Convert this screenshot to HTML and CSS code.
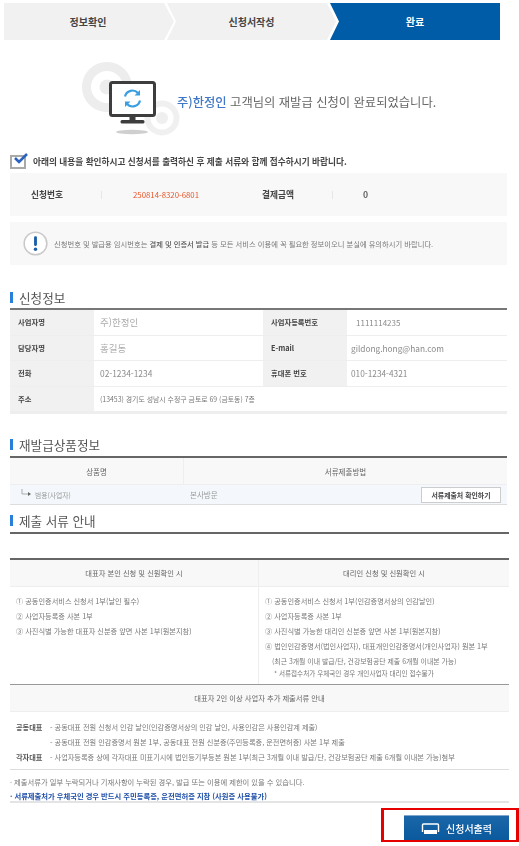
FILE: index.html
```html
<!DOCTYPE html>
<html lang="ko">
<head>
<meta charset="utf-8">
<title>재발급 신청 완료</title>
<link rel="stylesheet" href="styles.css">
</head>
<body>
<div class="page">
  <div class="steps">
    <div class="step step-first">정보확인</div>
    <div class="step step-mid">신청서작성</div>
    <div class="step step-last">완료</div>
  </div>

  <div class="hero">
    <svg class="hero-icon" width="100" height="76" viewBox="0 0 100 76">
      <circle cx="27" cy="26" r="20.500" fill="none" stroke="#ededed" stroke-width="9"/>
      <circle cx="27" cy="26" r="7.500" fill="#ededed"/>
      <circle cx="82" cy="57" r="14.500" fill="none" stroke="#f0f0f0" stroke-width="6"/>
      <circle cx="82" cy="57" r="6" fill="#efefef"/>
      <ellipse cx="52" cy="71" rx="16" ry="2.200" fill="#cfcfcf"/>
      <rect x="30.500" y="21.500" width="44" height="33" rx="2" fill="#fff" stroke="#3d3d3d" stroke-width="3"/>
      <rect x="49.500" y="55" width="6" height="5" fill="#3d3d3d"/>
      <rect x="40.500" y="59" width="24" height="3.600" rx="1.500" fill="#3d3d3d"/>
      <path d="M45 35.500a7.600 7.600 0 0 1 13-3.500" fill="none" stroke="#3a9ee0" stroke-width="2.200"/>
      <path d="M60 29v5.500h-5.500z" fill="#3a9ee0"/>
      <path d="M60 39.500a7.600 7.600 0 0 1-13 3.500" fill="none" stroke="#3a9ee0" stroke-width="2.200"/>
      <path d="M45 46v-5.500h5.500z" fill="#3a9ee0"/>
    </svg>
    <p class="hero-text"><span class="hero-name">주)한정인</span> 고객님의 재발급 신청이 완료되었습니다.</p>
  </div>

  <div class="confirm">
    <svg class="confirm-icon" width="18" height="16" viewBox="0 0 18 16">
      <rect x="1" y="3" width="14" height="12" fill="#fff" stroke="#a9a9a9" stroke-width="2"/>
      <path d="M5 5l4 4 8-8" fill="none" stroke="#2a62c0" stroke-width="2.600"/>
    </svg>
    <span>아래의 내용을 확인하시고 신청서를 출력하신 후 제출 서류와 함께 접수하시기 바랍니다.</span>
  </div>

  <div class="receipt">
    <span class="receipt-label">신청번호</span>
    <span class="divider"></span>
    <span class="receipt-no">250814-8320-6801</span>
    <span class="receipt-label">결제금액</span>
    <span class="divider"></span>
    <span class="receipt-amount">0</span>
  </div>

  <div class="notice">
    <svg width="25" height="25" viewBox="0 0 26 26">
      <circle cx="13" cy="13" r="11.800" fill="#fff" stroke="#c9c9c9" stroke-width="1.600"/>
      <rect x="11.500" y="5.500" width="3" height="10" rx="1.200" fill="#1d5fa8"/>
      <circle cx="13" cy="19" r="1.800" fill="#1d5fa8"/>
    </svg>
    <p>신청번호 및 발급용 임시번호는 <b>결제 및 인증서 발급</b> 등 모든 서비스 이용에 꼭 필요한 정보이오니 분실에 유의하시기 바랍니다.</p>
  </div>

  <h2 class="title title-info">신청정보</h2>
  <div class="info">
    <div class="lab">사업자명</div><div class="val val-lg">주)한정인</div>
    <div class="lab">사업자등록번호</div><div class="val val-id">1111114235</div>
    <div class="lab">담당자명</div><div class="val val-lg">홍길동</div>
    <div class="lab">E-mail</div><div class="val val-right">gildong.hong@han.com</div>
    <div class="lab">전화</div><div class="val">02-1234-1234</div>
    <div class="lab">휴대폰 번호</div><div class="val val-right">010-1234-4321</div>
    <div class="lab">주소</div><div class="val val-addr">(13453) 경기도 성남시 수정구 금토로 69 (금토동) 7층</div>
  </div>

  <h2 class="title title-prod">재발급상품정보</h2>
  <div class="prod">
    <div class="prod-head prod-head-a">상품명</div>
    <div class="prod-head">서류제출방법</div>
    <div class="prod-cell prod-name">
      <svg width="12" height="8" viewBox="0 0 12 8"><path d="M1 0v5h6" fill="none" stroke="#aaa"/><path d="M7 3l3 2-3 2z" fill="#666"/></svg>
      <span>범용(사업자)</span>
    </div>
    <div class="prod-cell prod-method">
      <span>본사방문</span>
      <button class="check-btn">서류제출처 확인하기</button>
    </div>
  </div>

  <h2 class="title title-docs">제출 서류 안내</h2>
  <div class="docs-gap"></div>
  <div class="docs">
    <div class="docs-head docs-left">대표자 본인 신청 및 신원확인 시</div>
    <div class="docs-head">대리인 신청 및 신원확인 시</div>
    <div class="docs-body docs-left">
      <p>① 공동인증서비스 신청서 1부(날인 필수)</p>
      <p>② 사업자등록증 사본 1부</p>
      <p>③ 사진식별 가능한 대표자 신분증 앞면 사본 1부(원본지참)</p>
    </div>
    <div class="docs-body">
      <p>① 공동인증서비스 신청서 1부(인감증명서상의 인감날인)</p>
      <p>② 사업자등록증 사본 1부</p>
      <p>③ 사진식별 가능한 대리인 신분증 앞면 사본 1부(원본지참)</p>
      <p>④ 법인인감증명서(법인사업자), 대표개인인감증명서(개인사업자) 원본 1부</p>
      <p class="docs-sub">(최근 3개월 이내 발급/단, 건강보험공단 제출 6개월 이내본 가능)</p>
      <p class="docs-foot">* 서류접수처가 우체국인 경우 개인사업자 대리인 접수불가</p>
    </div>
  </div>

  <div class="extra-head">대표자 2인 이상 사업자 추가 제출서류 안내</div>
  <div class="extra">
    <b>공동대표</b><span>- 공동대표 전원 신청서 인감 날인(인감증명서상의 인감 날인, 사용인감은 사용인감계 제출)</span>
    <b></b><span>- 공동대표 전원 인감증명서 원본 1부, 공동대표 전원 신분증(주민등록증, 운전면허증) 사본 1부 제출</span>
    <b>각자대표</b><span>- 사업자등록증 상에 각자대표 미표기시에 법인등기부등본 원본 1부(최근 3개월 이내 발급/단, 건강보험공단 제출 6개월 이내본 가능)첨부</span>
  </div>

  <div class="notes">
    <p>· 제출서류가 일부 누락되거나 기재사항이 누락된 경우, 발급 또는 이용에 제한이 있을 수 있습니다.</p>
    <p class="notes-strong">· 서류제출처가 우체국인 경우 반드시 주민등록증, 운전면허증 지참 (사원증 사용불가)</p>
  </div>

  <div class="actions">
    <div class="highlight">
      <button class="print-btn">
        <svg width="19" height="11" viewBox="0 0 19 11"><path d="M1.500 9V2a1 1 0 0 1 1-1h14a1 1 0 0 1 1 1v7" fill="none" stroke="#fff" stroke-width="1.400"/><rect x="3" y="7" width="13" height="4" fill="#fff"/></svg>
        <span>신청서출력</span>
      </button>
    </div>
  </div>
</div>
</body>
</html>
```

FILE: styles.css
```css
* { box-sizing: border-box; }
html, body { margin: 0; padding: 0; background: #fff; }
body {
  font-family: "Noto Sans CJK KR", "Noto Sans", sans-serif;
  color: #555;
  width: 519px;
  height: 846px;
  overflow: hidden;
}
p, h2 { margin: 0; }
.page { padding: 3px 0 0 10px; filter: blur(0.35px); }

.steps { display: flex; height: 37px; margin-left: -6px; width: 496px; font-size: 10px; font-weight: 700; color: #444; }
.step { display: flex; align-items: center; justify-content: center; background: #f1f1f1; }
.step-first { width: 170px; clip-path: polygon(0 0, 160px 0, 170px 50%, 160px 100%, 0 100%); padding-right: 2px; }
.step-mid { width: 169px; margin-left: -7px; clip-path: polygon(0 0, 160px 0, 169px 50%, 160px 100%, 0 100%, 9px 50%); }
.step-last { width: 170px; margin-left: -6px; background: #005ca6; color: #fff; clip-path: polygon(0 0, 100% 0, 100% 100%, 0 100%, 9px 50%); }

.hero { display: flex; align-items: center; height: 76px; margin-top: 20px; margin-left: 70px; }
.hero-icon { flex: none; margin-right: -3px; position: relative; top: 1px; overflow: visible; }
.hero-text { font-size: 12.300px; color: #666; white-space: nowrap; margin-top: 8px; }
.hero-name { color: #3f78c8; font-weight: 500; }

.confirm { display: flex; align-items: center; gap: 5px; height: 18px; margin-top: 16px; font-size: 8.670px; font-weight: 700; color: #444; white-space: nowrap; }
.confirm-icon { flex: none; }

.receipt { display: flex; align-items: center; width: 497px; height: 43px; margin-top: 3px; padding-left: 21px; background: #f8f8f8; font-size: 8.700px; }
.receipt-label { width: 70px; font-weight: 700; color: #444; }
.divider { width: 1px; height: 8px; background: #e6e6e6; }
.receipt-no { width: 129px; margin-left: 31px; font-size: 7.800px; color: #e8562a; }
.receipt-amount { margin-left: 30px; font-weight: 700; color: #666; }

.notice { display: flex; align-items: center; gap: 6px; width: 497px; height: 43px; margin-top: 6px; padding-left: 13px; background: #f8f8f8; font-size: 7.300px; color: #777; white-space: nowrap; }
.notice svg { flex: none; }
.notice b { color: #555; font-weight: 500; }

.title { display: flex; align-items: center; height: 11px; padding-left: 6px; border-left: 3px solid #2a80d8; font-size: 12.600px; font-weight: 400; line-height: 16px; color: #555; white-space: nowrap; }
.title-info { margin-top: 27px; }
.title-prod { margin-top: 25px; }
.title-docs { margin-top: 10px; }

.info { display: grid; grid-template-columns: 84px 169px 84px 160px; grid-auto-rows: 25.500px; width: 497px; margin-top: 5px; border-top: 2px solid #777; border-bottom: 2px solid #eee; }
.lab, .val { display: flex; align-items: center; border-bottom: 1px solid #eee; }
.lab { padding-left: 8px; background: #f1f1f1; font-size: 7.300px; font-weight: 700; color: #444; }
.val { padding-left: 6px; font-size: 8.400px; color: #8a8a8a; }
.val-lg { font-size: 9.500px; color: #aaa; }
.val-id { padding-left: 9px; font-size: 8px; }
.val-right { padding-left: 4px; font-size: 8.300px; }
.val-addr { grid-column: span 3; font-size: 6.900px; color: #777; }

.prod { display: grid; grid-template-columns: 174px 323px; width: 497px; margin-top: 6px; border-top: 2px solid #666; border-bottom: 1px solid #ddd; }
.prod-head { display: flex; align-items: center; justify-content: center; height: 27px; background: #f8f8f8; font-size: 7.500px; color: #666; border-bottom: 1px solid #eee; }
.prod-head-a { border-right: 1px solid #eee; }
.prod-cell { display: flex; align-items: center; height: 19px; background: #f4f8fc; font-size: 7.500px; color: #999; }
.prod-name { gap: 2px; padding-left: 11px; font-size: 6.800px; }
.prod-name svg { margin-bottom: 3px; }
.prod-method { justify-content: space-between; padding: 0 6px 0 6px; }
.check-btn { width: 80px; height: 16px; padding: 0; border: 1px solid #ccc; background: #fff; font-family: inherit; font-size: 6.900px; font-weight: 700; color: #444; }

.docs-gap { width: 499px; height: 26px; margin-top: 6px; border-top: 2px solid #666; }
.docs { display: grid; grid-template-columns: 249px 250px; width: 499px; border-top: 2px solid #666; border-bottom: 1px solid #999; }
.docs-left { border-right: 1px solid #eee; }
.docs-head { display: flex; align-items: center; justify-content: center; height: 27px; background: #f8f8f8; border-bottom: 1px solid #eee; font-size: 7.300px; color: #666; }
.docs-body { height: 97px; padding: 7px 0 0 6px; font-size: 7.200px; color: #777; }
.docs-body p { line-height: 15px; white-space: nowrap; }
.docs-body .docs-sub { padding-left: 7px; line-height: 14px; font-size: 6.900px; }
.docs-body .docs-foot { padding-left: 9px; line-height: 10px; font-size: 6.600px; }

.extra-head { display: flex; align-items: center; justify-content: center; width: 499px; height: 27px; border-bottom: 1px solid #eee; background: #f8f8f8; font-size: 7.300px; color: #666; }
.extra { display: grid; grid-template-columns: 34px 1fr; grid-auto-rows: 15px; align-items: center; width: 499px; height: 58px; padding: 7px 0 0 6px; border-bottom: 1px solid #ddd; font-size: 7.200px; color: #777; white-space: nowrap; }
.extra b { color: #555; font-weight: 700; }

.notes { width: 499px; height: 33px; padding-top: 5px; border-bottom: 2px solid #e4e4e4; font-size: 7.300px; color: #777; white-space: nowrap; }
.notes p { line-height: 14px; }
.notes .notes-strong { color: #1f4fa8; font-weight: 700; }

.actions { display: flex; justify-content: flex-end; width: 509px; margin-top: 5px; }
.highlight { display: flex; justify-content: flex-end; align-items: flex-end; width: 138px; height: 34px; padding-right: 7px; border: 3px solid #e60000; border-width: 2px 3px; }
.print-btn { display: flex; align-items: center; justify-content: center; gap: 6px; width: 105px; height: 25px; padding: 0; border: none; border-top: 1px solid #7fa6cc; background: linear-gradient(#1a66a8, #0a5a9e); color: #fff; font-family: inherit; font-size: 10px; font-weight: 500; }
```
